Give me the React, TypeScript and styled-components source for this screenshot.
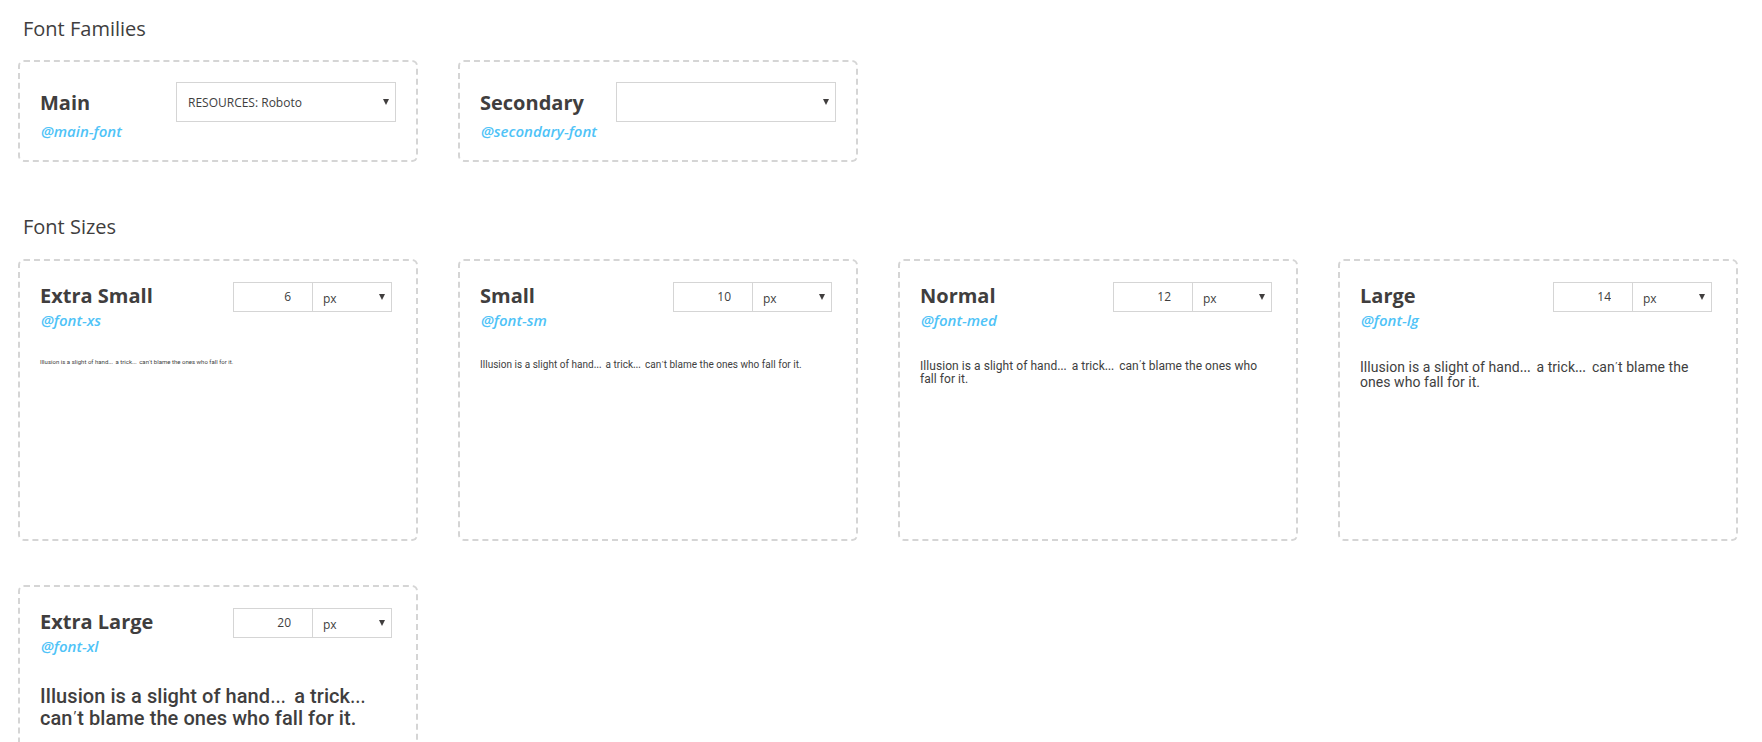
import React from "react";
import styled, { createGlobalStyle } from "styled-components";

const GlobalStyle = createGlobalStyle`
  html, body {
    margin: 0;
    padding: 0;
    background: #fff;
    height: 742px;
    overflow: hidden;
  }
  body {
    font-family: "Open Sans", sans-serif;
    color: #3a3838;
  }
`;

const Page = styled.div`
  padding: 16px 0 0 18px;
`;

const SectionTitle = styled.h2`
  margin: 0 0 0 5px;
  font-size: 20px;
  line-height: 26px;
  font-weight: 400;
  color: #403e3e;
`;

const CardGrid = styled.div<{ $tall?: boolean }>`
  display: grid;
  grid-template-columns: repeat(4, 400px);
  column-gap: 40px;
  row-gap: 44px;
  margin-top: ${(p) => (p.$tall ? "19px" : "18px")};
  margin-bottom: 52px;
`;

const Card = styled.div<{ $tall?: boolean }>`
  box-sizing: border-box;
  height: ${(p) => (p.$tall ? "282px" : "102px")};
  border: 2px dashed #d5d5d5;
  border-radius: 6px;
  padding: 20px 20px 0 20px;
`;

const CardHead = styled.div`
  display: flex;
  justify-content: space-between;
  align-items: flex-start;
`;

const Name = styled.div<{ $family?: boolean }>`
  margin-top: ${(p) => (p.$family ? "7px" : "1px")};
  font-size: 20px;
  line-height: 27px;
  font-weight: 700;
  color: #403e3e;
`;

const Variable = styled.div<{ $family?: boolean }>`
  margin-top: ${(p) => (p.$family ? "5px" : "1px")};
  margin-left: 1px;
  font-size: 15px;
  line-height: 20px;
  font-style: italic;
  font-weight: 600;
  color: #4fc3f7;
`;

const SelectWrap = styled.div<{ $width: number; $joined?: boolean }>`
  position: relative;
  box-sizing: border-box;
  width: ${(p) => p.$width}px;
  height: ${(p) => (p.$joined ? "30px" : "40px")};
`;

const Select = styled.select<{ $joined?: boolean }>`
  appearance: none;
  box-sizing: border-box;
  width: 100%;
  height: 100%;
  margin: 0;
  padding: ${(p) => (p.$joined ? "2px 0 0 10px" : "1px 0 0 11px")};
  border: 1px solid #d5d5d5;
  border-left-width: ${(p) => (p.$joined ? "0" : "1px")};
  border-radius: 0;
  background: #fff;
  font-family: "Open Sans", sans-serif;
  font-size: 12px;
  color: #403e3e;
`;

const Arrow = styled.span`
  position: absolute;
  top: 50%;
  right: 7px;
  transform: translateY(-50%);
  width: 0;
  height: 0;
  border-left: 3px solid transparent;
  border-right: 3px solid transparent;
  border-top: 6px solid #403e3e;
  pointer-events: none;
`;

const SizeGroup = styled.div`
  display: flex;
  margin-right: 4px;
  margin-top: 1px;
`;

const SizeInput = styled.input`
  box-sizing: border-box;
  width: 80px;
  height: 30px;
  margin: 0;
  padding: 0 21px 2px 0;
  border: 1px solid #d5d5d5;
  border-radius: 0;
  text-align: right;
  font-family: "Open Sans", sans-serif;
  font-size: 12px;
  color: #403e3e;
  outline: none;
`;

const Sample = styled.p<{ $size: number; $spacing: number }>`
  margin: 29px 0 0;
  font-family: Roboto, sans-serif;
  font-size: ${(p) => p.$size}px;
  line-height: 1.1;
  letter-spacing: ${(p) => p.$spacing}px;
  font-weight: ${(p) => (p.$size > 14 ? 500 : 400)};
  color: #403e3e;
`;

// the dots and the apostrophe come from the page font, not Roboto
const Dots = styled.span`
  font-family: "Open Sans", sans-serif;
  font-weight: 400;
  letter-spacing: 0.17em;
`;

const Tick = styled.span`
  margin: 0 0.08em;
  font-family: "Open Sans", sans-serif;
  font-weight: 400;
  font-size: 0.7em;
  line-height: 0;
  vertical-align: 0.3em;
`;

const sizes = [
  { name: "Extra Small", variable: "@font-xs", size: 6, spacing: 0.016 },
  { name: "Small", variable: "@font-sm", size: 10, spacing: 0.02 },
  { name: "Normal", variable: "@font-med", size: 12, spacing: 0.055 },
  { name: "Large", variable: "@font-lg", size: 14, spacing: 0.05 },
  { name: "Extra Large", variable: "@font-xl", size: 20, spacing: 0.07 },
];

const families = [
  { name: "Main", variable: "@main-font", value: "RESOURCES: Roboto" },
  { name: "Secondary", variable: "@secondary-font", value: "" },
];

const App = () => {
  return (
    <Page>
      <GlobalStyle />
      <SectionTitle>Font Families</SectionTitle>
      <CardGrid>
        {families.map((f) => (
          <Card key={f.name}>
            <CardHead>
              <div>
                <Name $family>{f.name}</Name>
                <Variable $family>{f.variable}</Variable>
              </div>
              <SelectWrap $width={220}>
                <Select defaultValue={f.value}>
                  <option value={f.value}>{f.value}</option>
                </Select>
                <Arrow />
              </SelectWrap>
            </CardHead>
          </Card>
        ))}
      </CardGrid>
      <SectionTitle>Font Sizes</SectionTitle>
      <CardGrid $tall>
        {sizes.map((s) => (
          <Card key={s.name} $tall>
            <CardHead>
              <div>
                <Name>{s.name}</Name>
                <Variable>{s.variable}</Variable>
              </div>
              <SizeGroup>
                <SizeInput defaultValue={s.size} />
                <SelectWrap $width={79} $joined>
                  <Select $joined defaultValue="px">
                    <option value="px">px</option>
                  </Select>
                  <Arrow />
                </SelectWrap>
              </SizeGroup>
            </CardHead>
            <Sample $size={s.size} $spacing={s.spacing}>
              Illusion is a slight of hand<Dots>…</Dots> a trick<Dots>…</Dots> can<Tick>’</Tick>t blame the ones who fall for it.
            </Sample>
          </Card>
        ))}
      </CardGrid>
    </Page>
  );
};

export default App;
